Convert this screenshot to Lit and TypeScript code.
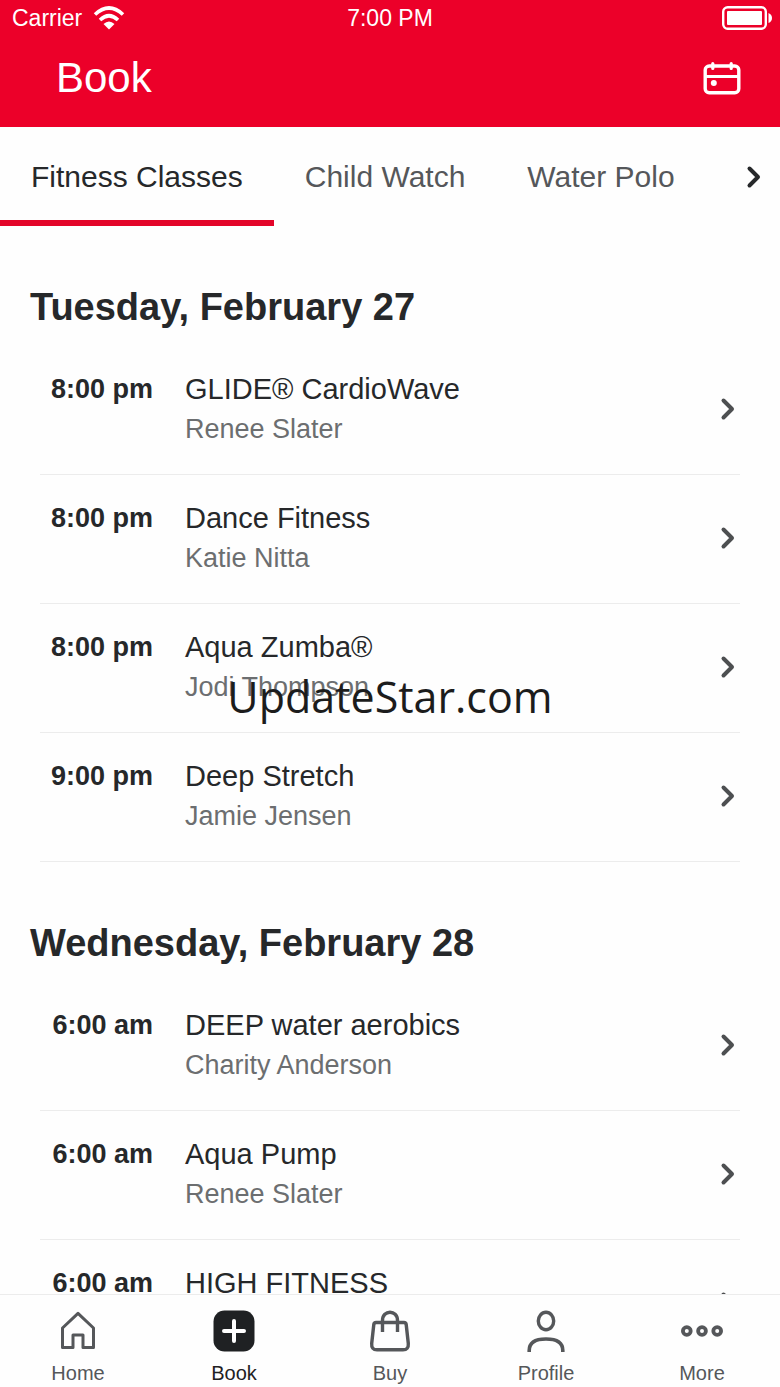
import { LitElement, html, css, svg, TemplateResult } from "lit";
import { customElement, property, state } from "lit/decorators.js";
import { classMap } from "lit/directives/class-map.js";

interface FitnessClass {
  time: string;
  title: string;
  coach: string;
}

interface Day {
  date: string;
  classes: FitnessClass[];
}

const DAYS: Day[] = [
  {
    date: "Tuesday, February 27",
    classes: [
      { time: "8:00 pm", title: "GLIDE® CardioWave", coach: "Renee Slater" },
      { time: "8:00 pm", title: "Dance Fitness", coach: "Katie Nitta" },
      { time: "8:00 pm", title: "Aqua Zumba®", coach: "Jodi Thompson" },
      { time: "9:00 pm", title: "Deep Stretch", coach: "Jamie Jensen" },
    ],
  },
  {
    date: "Wednesday, February 28",
    classes: [
      { time: "6:00 am", title: "DEEP water aerobics", coach: "Charity Anderson" },
      { time: "6:00 am", title: "Aqua Pump", coach: "Renee Slater" },
      { time: "6:00 am", title: "HIGH FITNESS", coach: "" },
    ],
  },
];

const TABS = ["Fitness Classes", "Child Watch", "Water Polo"];

const ICONS: Record<string, TemplateResult> = {
  Home: svg`<path d="M6.500 19 22 4.300 37.500 19V38.500H27V26H17V38.500H6.500Z" fill="none" stroke="currentColor" stroke-width="3" stroke-linejoin="round"/>`,
  Book: svg`<rect x="1.500" y="1.500" width="41" height="41" rx="11" fill="currentColor"/><path d="M22 12V32M12 22H32" stroke="#fff" stroke-width="4" stroke-linecap="round"/>`,
  Buy: svg`<path d="M8 13.500H36Q38 13.500 38.200 15.500L40.300 34.500Q40.800 40.800 35 40.800H9Q3.200 40.800 3.700 34.500L5.800 15.500Q6 13.500 8 13.500ZM14.500 23V11.500C14.500 .5 29.500 .5 29.500 11.500V23" fill="none" stroke="currentColor" stroke-width="3.400"/>`,
  Profile: svg`<ellipse cx="22" cy="12" rx="7.700" ry="8.800" fill="none" stroke="currentColor" stroke-width="3.400"/><path d="M5.200 43V41.500C5.200 33 12 30 22 30S38.800 33 38.800 41.500V43" fill="none" stroke="currentColor" stroke-width="3.600"/>`,
  More: svg`<g fill="none" stroke="currentColor" stroke-width="3.800"><circle cx="6.800" cy="22" r="3.900"/><circle cx="22" cy="22" r="3.900"/><circle cx="37.200" cy="22" r="3.900"/></g>`,
};

const chevron = html`<svg class="chevron" viewBox="0 0 16 24" aria-hidden="true">
  <path d="M3.500 3.500 12 12 3.500 20.500" fill="none" stroke="currentColor" stroke-width="4" stroke-linecap="round" stroke-linejoin="round" />
</svg>`;

@customElement("class-row")
class ClassRow extends LitElement {
  @property({ attribute: false }) item!: FitnessClass;

  static styles = css`
    :host {
      display: block;
    }
    .row {
      display: grid;
      grid-template-columns: 113px 1fr auto;
      column-gap: 32px;
      align-items: center;
      padding: 23px 4px 25px 0;
      border-bottom: 1px solid #ececec;
      color: #26282a;
      text-decoration: none;
      line-height: 40px;
    }
    .time {
      align-self: start;
      text-align: right;
      font-size: 27px;
      font-weight: 700;
    }
    .info {
      min-width: 0;
      min-height: 80px;
    }
    .title {
      display: block;
      font-size: 29px;
    }
    .coach {
      display: block;
      font-size: 27px;
      color: #6c6e70;
    }
    .chevron {
      width: 16px;
      height: 24px;
      color: #4d4f51;
    }
  `;

  render() {
    const { time, title, coach } = this.item;
    return html`<a class="row" href="#class">
      <span class="time">${time}</span>
      <span class="info">
        <span class="title">${title}</span>
        <span class="coach">${coach}</span>
      </span>
      ${chevron}
    </a>`;
  }
}

@customElement("app-root")
class AppRoot extends LitElement {
  @state() private tab = 0;
  @state() private page = "Book";

  static styles = css`
    :host {
      position: relative;
      display: flex;
      flex-direction: column;
      height: 100vh;
      overflow: hidden;
      background: #fefefe;
      color: #26282a;
      font-family: "Liberation Sans", Arial, Helvetica, sans-serif;
    }
    button {
      border: 0;
      padding: 0;
      background: none;
      color: inherit;
      font: inherit;
      cursor: pointer;
    }
    svg {
      display: block;
    }
    .header {
      flex: none;
      background: #ec0029;
      color: #fff;
    }
    .status {
      display: grid;
      grid-template-columns: 1fr auto 1fr;
      align-items: center;
      padding: 0 8px;
      font-size: 23px;
      line-height: 36px;
    }
    .carrier {
      display: flex;
      align-items: center;
      gap: 11px;
      padding-left: 4px;
    }
    .wifi {
      width: 32px;
      height: 24px;
    }
    .battery {
      width: 50px;
      height: 24px;
      justify-self: end;
    }
    .bar {
      display: flex;
      align-items: center;
      justify-content: space-between;
      padding: 18px 38px 25px 56px;
    }
    .heading {
      margin: 0;
      font-size: 42px;
      font-weight: 400;
      line-height: 48px;
    }
    .calendar {
      width: 40px;
      height: 36px;
    }
    .tabs {
      flex: none;
      display: flex;
      align-items: center;
    }
    .tab {
      padding: 30px 31px 23px;
      border-bottom: 6px solid transparent;
      font-size: 30px;
      line-height: 40px;
      color: #55575a;
      white-space: nowrap;
    }
    .tab.active {
      border-color: #e30529;
      color: #26282a;
    }
    .next {
      margin-left: auto;
      padding: 8px 18px;
    }
    .chevron {
      width: 16px;
      height: 24px;
    }
    .schedule {
      flex: 1;
      min-height: 0;
      overflow-y: auto;
      scrollbar-width: none;
    }
    .day {
      padding-top: 61px;
    }
    .date {
      margin: 0 30px 19px;
      font-size: 38px;
      font-weight: 700;
      line-height: 40px;
    }
    .list {
      margin: 0 40px;
      padding: 0;
      list-style: none;
    }
    .nav {
      flex: none;
      display: grid;
      grid-template-columns: repeat(5, 1fr);
      border-top: 1px solid #ececec;
      background: #fefefe;
    }
    .item {
      display: flex;
      flex-direction: column;
      align-items: center;
      gap: 8px;
      padding: 14px 0 2px;
      color: #55575a;
      font-size: 20px;
      line-height: 24px;
      text-decoration: none;
    }
    .item.active {
      color: #1f2123;
    }
    .icon {
      width: 44px;
      height: 44px;
    }
    .watermark {
      position: absolute;
      inset: 0;
      display: grid;
      place-items: center;
      padding-top: 5px;
      pointer-events: none;
      font-family: "Open Sans", "Noto Sans", sans-serif;
      font-size: 43px;
      color: #1c1c1c;
    }
  `;

  render() {
    return html`
      <header class="header">
        <div class="status">
          <span class="carrier">
            Carrier
            <svg class="wifi" viewBox="0 0 32 24" role="img" aria-label="Wi-Fi">
              <path d="M2 8.500Q16-4.500 30 8.500M7 14Q16 5.500 25 14" fill="none" stroke="#fff" stroke-width="3.600" />
              <path d="M10.500 18Q16 13 21.500 18L16 23.500Z" fill="#fff" />
            </svg>
          </span>
          <span>7:00 PM</span>
          <svg class="battery" viewBox="0 0 50 24" role="img" aria-label="Battery full">
            <rect x="1.200" y="1.200" width="42.600" height="21.600" rx="4.500" fill="none" stroke="#fff" stroke-width="2.400" />
            <rect x="5" y="5" width="35" height="14" rx="1" fill="#fff" />
            <path d="M46.500 7Q50 8.500 50 12T46.500 17Z" fill="#fff" />
          </svg>
        </div>
        <div class="bar">
          <h1 class="heading">Book</h1>
          <button class="open" aria-label="Open calendar">
            <svg class="calendar" viewBox="0 0 40 36" aria-hidden="true">
              <rect x="3.200" y="6" width="33.600" height="26.800" rx="4" fill="none" stroke="#fff" stroke-width="3.400" />
              <path d="M3.500 16.500H36.500M10.800 3.500V8.500M29.200 3.500V8.500" stroke="#fff" stroke-width="3.200" stroke-linecap="round" />
              <circle cx="11.800" cy="23" r="3" fill="#fff" />
            </svg>
          </button>
        </div>
      </header>
      <div class="tabs">
        ${TABS.map(
          (name, i) => html`<button
            class=${classMap({ tab: true, active: i === this.tab })}
            aria-pressed=${i === this.tab}
            @click=${() => (this.tab = i)}
          >${name}</button>`
        )}
        <button class="next" aria-label="More categories">${chevron}</button>
      </div>
      <main class="schedule">
        ${DAYS.map(
          (day) => html`<section class="day">
            <h2 class="date">${day.date}</h2>
            <ul class="list">
              ${day.classes.map((item) => html`<li><class-row .item=${item}></class-row></li>`)}
            </ul>
          </section>`
        )}
      </main>
      <nav class="nav">
        ${Object.entries(ICONS).map(
          ([name, icon]) => html`<a
            class=${classMap({ item: true, active: name === this.page })}
            href="#${name.toLowerCase()}"
            @click=${() => (this.page = name)}
          >
            <svg class="icon" viewBox="0 0 44 44" aria-hidden="true">${icon}</svg>
            ${name}
          </a>`
        )}
      </nav>
      <div class="watermark">UpdateStar.com</div>
    `;
  }
}
